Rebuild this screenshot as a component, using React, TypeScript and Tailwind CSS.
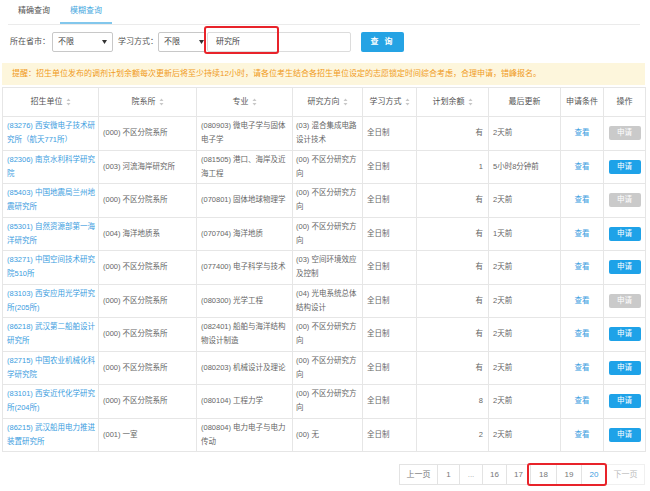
import React from "react";

type Row = {
  unit: string[];
  dept: string;
  major: string[];
  dir: string[];
  quota: string;
  updated: string;
  open: boolean;
};

const rows: Row[] = [
  { unit: ["(83276) 西安微电子技术研", "究所（航天771所）"], dept: "(000) 不区分院系所", major: ["(080903) 微电子学与固体", "电子学"], dir: ["(03) 混合集成电路", "设计技术"], quota: "有", updated: "2天前", open: false },
  { unit: ["(82306) 南京水利科学研究", "院"], dept: "(003) 河流海岸研究所", major: ["(081505) 港口、海岸及近", "海工程"], dir: ["(00) 不区分研究方", "向"], quota: "1", updated: "5小时8分钟前", open: true },
  { unit: ["(85403) 中国地震局兰州地", "震研究所"], dept: "(000) 不区分院系所", major: ["(070801) 固体地球物理学"], dir: ["(00) 不区分研究方", "向"], quota: "有", updated: "2天前", open: false },
  { unit: ["(85301) 自然资源部第一海", "洋研究所"], dept: "(004) 海洋地质系", major: ["(070704) 海洋地质"], dir: ["(00) 不区分研究方", "向"], quota: "有", updated: "1天前", open: true },
  { unit: ["(83271) 中国空间技术研究", "院510所"], dept: "(000) 不区分院系所", major: ["(077400) 电子科学与技术"], dir: ["(03) 空间环境效应", "及控制"], quota: "有", updated: "2天前", open: true },
  { unit: ["(83103) 西安应用光学研究", "所(205所)"], dept: "(000) 不区分院系所", major: ["(080300) 光学工程"], dir: ["(04) 光电系统总体", "结构设计"], quota: "有", updated: "2天前", open: false },
  { unit: ["(86218) 武汉第二船舶设计", "研究所"], dept: "(000) 不区分院系所", major: ["(082401) 船舶与海洋结构", "物设计制造"], dir: ["(00) 不区分研究方", "向"], quota: "有", updated: "2天前", open: true },
  { unit: ["(82715) 中国农业机械化科", "学研究院"], dept: "(000) 不区分院系所", major: ["(080203) 机械设计及理论"], dir: ["(00) 不区分研究方", "向"], quota: "有", updated: "2天前", open: true },
  { unit: ["(83101) 西安近代化学研究", "所(204所)"], dept: "(000) 不区分院系所", major: ["(080104) 工程力学"], dir: ["(00) 不区分研究方", "向"], quota: "8", updated: "2天前", open: true },
  { unit: ["(86215) 武汉船用电力推进", "装置研究所"], dept: "(001) 一室", major: ["(080804) 电力电子与电力", "传动"], dir: ["(00) 无"], quota: "2", updated: "2天前", open: true },
];

function SortIcon() {
  return (
    <svg width="5" height="8" viewBox="0 0 5 8" className="inline-block ml-[3px] align-middle">
      <path d="M2.5 0.5 L4.5 3 L0.5 3 Z" fill="#c8c8c8" />
      <path d="M2.5 7.5 L4.5 5 L0.5 5 Z" fill="#c8c8c8" />
    </svg>
  );
}

function Caret() {
  return (
    <svg width="5" height="4" viewBox="0 0 5 4">
      <path d="M0 0 L5 0 L2.5 4 Z" fill="#333" />
    </svg>
  );
}

function Lines({ parts }: { parts: string[] }) {
  return (
    <>
      {parts.map((p, i) => (
        <div key={i} className="whitespace-nowrap">{p}</div>
      ))}
    </>
  );
}

const headers: { label: string; sort: boolean }[] = [
  { label: "招生单位", sort: true },
  { label: "院系所", sort: true },
  { label: "专业", sort: true },
  { label: "研究方向", sort: true },
  { label: "学习方式", sort: true },
  { label: "计划余额", sort: true },
  { label: "最后更新", sort: false },
  { label: "申请条件", sort: false },
  { label: "操作", sort: false },
];

const pages = ["上一页", "1", "...", "16", "17", "18", "19", "20", "下一页"];
const pageWidths = ["w-[39px]", "w-[23px]", "w-[24px]", "w-[25px]", "w-[25px]", "w-[27px]", "w-[26px]", "w-[26px]", "w-[39px]"];

function pageTone(p: string, last: boolean) {
  if (last) return "border-[#f0f0f0] text-[#bbb]";
  if (p === "20") return "border-[#e3e3e3] text-[#3b9de0]";
  if (p === "...") return "border-[#e3e3e3] text-[#aaa]";
  return "border-[#e3e3e3] text-[#777]";
}

export default function App() {
  return (
    <div className="relative w-[650px] h-[491px] bg-white overflow-hidden font-['Liberation_Sans','Noto_Sans_CJK_SC',sans-serif] text-[#666]">
      {/* tabs */}
      <div className="flex ml-[8px] mr-[10px] h-[25px] border-b border-[#ebebeb]">
        <div className="w-[52px] text-center text-[8px] leading-[22px] text-[#555]">精确查询</div>
        <div className="w-[52px] text-center text-[8px] leading-[22px] text-[#46a8e0] border-b-2 border-[#82c7ec]">模糊查询</div>
      </div>

      {/* filters */}
      <div className="relative flex items-center h-[20px] mt-[7px] pl-[10px] text-[8px]">
        <span className="text-[#555]">所在省市：</span>
        <div className="ml-[2px] flex items-center justify-between w-[61px] h-[20px] border border-[#c8c8c8] rounded-[2px] pl-[5px] pr-[5px] text-[#444]">
          <span>不限</span>
          <Caret />
        </div>
        <span className="ml-[5px] text-[#555]">学习方式：</span>
        <div className="flex items-center justify-between w-[48px] h-[20px] border border-[#c8c8c8] rounded-[2px] pl-[5px] pr-[1px] text-[#444]">
          <span>不限</span>
          <Caret />
        </div>
        <div className="ml-[1px] flex items-center w-[144px] h-[20px] border border-[#dcdcdc] rounded-[2px] pl-[8px] text-[#444]">
          研究所
        </div>
        <button className="ml-[10px] w-[43px] h-[20px] rounded-[2px] bg-[#25a3e4] text-white text-[8px] font-bold tracking-[2px]">
          查 询
        </button>
        <div className="absolute left-[204px] top-[-6px] w-[75px] h-[28px] border-2 border-[#e8232a] rounded-[3px]" />
      </div>

      {/* notice */}
      <div className="mt-[11px] ml-[2px] w-[643px] h-[22px] bg-[#fdf6dc] pl-[10px] text-[8px] leading-[22px] text-[#f09a22] whitespace-nowrap">
        提醒：招生单位发布的调剂计划余额每次更新后将至少持续12小时，请各位考生结合各招生单位设定的志愿锁定时间综合考虑，合理申请，错峰报名。
      </div>

      {/* table */}
      <table className="mt-[2px] ml-[2px] w-[643px] table-fixed border-collapse text-[7.5px] leading-[14px]">
        <colgroup>
          <col className="w-[96px]" />
          <col className="w-[98px]" />
          <col className="w-[96px]" />
          <col className="w-[70px]" />
          <col className="w-[54px]" />
          <col className="w-[72px]" />
          <col className="w-[72px]" />
          <col className="w-[43px]" />
          <col className="w-[42px]" />
        </colgroup>
        <thead>
          <tr className="h-[29px]">
            {headers.map((h) => (
              <th key={h.label} className="border border-[#e6e6e6] font-normal text-[8px] text-[#555] text-center whitespace-nowrap">
                {h.label}
                {h.sort && <SortIcon />}
              </th>
            ))}
          </tr>
        </thead>
        <tbody>
          {rows.map((r, i) => (
            <tr key={i} className="h-[33.5px]">
              <td className="border border-[#e6e6e6] px-[4px] text-[#3b9de0]">
                <Lines parts={r.unit} />
              </td>
              <td className="border border-[#e6e6e6] px-[4px] whitespace-nowrap">{r.dept}</td>
              <td className="border border-[#e6e6e6] px-[4px]">
                <Lines parts={r.major} />
              </td>
              <td className="border border-[#e6e6e6] px-[3px]">
                <Lines parts={r.dir} />
              </td>
              <td className="border border-[#e6e6e6] px-[4px]">全日制</td>
              <td className="border border-[#e6e6e6] pr-[5px] text-right text-[#666]">{r.quota}</td>
              <td className="border border-[#e6e6e6] pl-[4px] whitespace-nowrap">{r.updated}</td>
              <td className="border border-[#e6e6e6] text-center text-[#3b9de0]">查看</td>
              <td className="border border-[#e6e6e6] text-center">
                <span
                  className={
                    r.open
                      ? "inline-block w-[32px] h-[14px] rounded-[2px] bg-[#1ea2e8] text-white leading-[14px] text-[7.5px]"
                      : "inline-block w-[32px] h-[14px] rounded-[2px] bg-[#cacaca] text-white leading-[14px] text-[7.5px]"
                  }
                >
                  申请
                </span>
              </td>
            </tr>
          ))}
        </tbody>
      </table>

      {/* pagination */}
      <div className="relative flex justify-end mt-[12px] pr-[5px] text-[8px]">
        {pages.map((p, i) => (
          <div
            key={p}
            className={`${pageWidths[i]} h-[21px] -ml-px flex items-center justify-center border ${pageTone(p, i === pages.length - 1)}`}
          >
            {p}
          </div>
        ))}
        <div className="absolute left-[527px] top-[-1px] w-[80px] h-[23px] border-2 border-[#e8232a] rounded-[3px]" />
      </div>
    </div>
  );
}
